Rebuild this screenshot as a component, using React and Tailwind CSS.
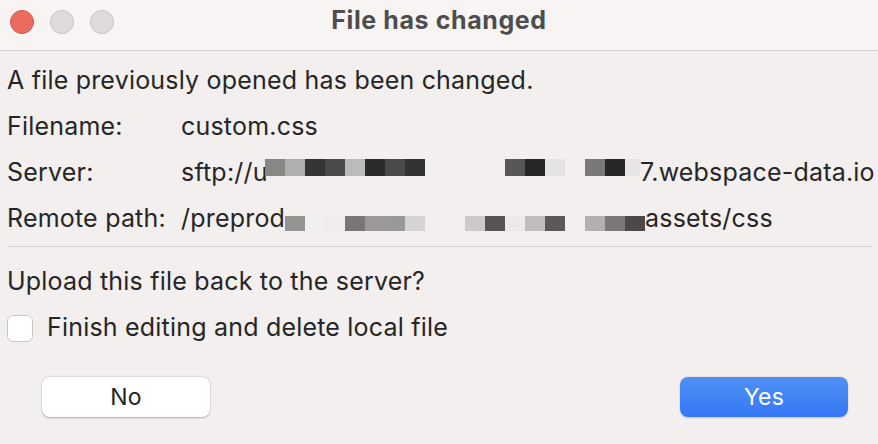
import React from "react";

const serverBlocks = [
  ["#878786", 20], ["#b0afaf", 20], ["#353535", 20], ["#4a4a4a", 20],
  ["#bcbbba", 20], ["#2b2b2b", 20], ["#4b4b4b", 20], ["#333332", 20],
  [null, 80],
  ["#585657", 20], ["#262626", 20], ["#e6e4e3", 20],
  [null, 20],
  ["#7a7978", 20], ["#272727", 20], ["#e7e5e4", 15],
];

const pathBlocks = [
  ["#959494", 20], ["#f1f0ee", 20], ["#efedec", 20], ["#777675", 20],
  ["#9a9998", 20], ["#999898", 20], ["#d5d4d3", 20],
  [null, 40],
  ["#cbcac9", 20], ["#555453", 20], ["#ebeae8", 20], ["#bebdbc", 20], ["#5a5958", 20],
  [null, 20],
  ["#b1b0af", 20], ["#7a7978", 20], ["#4a4948", 20],
];

function Pixels({ blocks, h, className }) {
  return (
    <span className={`flex shrink-0 ${className}`}>
      {blocks.map(([c, w], i) => (
        <span key={i} className="block shrink-0" style={{ width: w, height: h, background: c || "transparent" }} />
      ))}
    </span>
  );
}

function Row({ label, children }) {
  return (
    <div className="flex items-center h-[46px]">
      <span className="w-[174px] shrink-0">{label}</span>
      <div className="flex items-center whitespace-nowrap">{children}</div>
    </div>
  );
}

export default function App() {
  return (
    <div
      className="w-[878px] h-[444px] bg-[#f2efee] text-[#262626] overflow-hidden"
      style={{ fontFamily: "Inter, 'Noto Sans', sans-serif" }}
    >
      {/* title bar */}
      <div className="relative h-[51px] bg-[#f7f4f3] border-b border-[#d2cfce] flex items-center justify-center">
        <div className="absolute left-[10px] top-[10px] flex gap-[16px]">
          <span className="w-[24px] h-[24px] rounded-full bg-[#ed6a5e] border border-[#d5574c]" />
          <span className="w-[24px] h-[24px] rounded-full bg-[#dedbda] border border-[#c5c2c1]" />
          <span className="w-[24px] h-[24px] rounded-full bg-[#dedbda] border border-[#c5c2c1]" />
        </div>
        <h1 className="text-[25px] font-bold tracking-[0.6px] text-[#4d4d4d] -mt-[9px]">File has changed</h1>
      </div>

      <div className="pl-[7px] pr-[6px] pt-[7px] text-[25px] tracking-[0.2px]">
        <div className="flex items-center h-[46px]">A file previously opened has been changed.</div>
        <Row label="Filename:">custom.css</Row>
        <Row label="Server:">
          <span className="w-[84px] shrink-0">sftp://u</span>
          <Pixels blocks={serverBlocks} h={17} className="mb-[11px]" />
          <span>7.webspace-data.io</span>
        </Row>
        <Row label="Remote path:">
          <span className="w-[104px] shrink-0">/preprod</span>
          <Pixels blocks={pathBlocks} h={15} className="mt-[9px]" />
          <span>assets/css</span>
        </Row>

        <div className="mt-[4px] h-px bg-[#d8d5d4]" />

        <div className="flex items-center h-[46px] mt-[12px]">Upload this file back to the server?</div>
        <div className="flex items-center h-[46px]">
          <span className="w-[26px] h-[27px] rounded-[6px] bg-white border border-[#cac7c6] mr-[14px]" />
          Finish editing and delete local file
        </div>

        <div className="flex justify-between mt-[26px] pl-[35px] pr-[24px]">
          <button className="w-[168px] h-[40px] rounded-[8px] bg-white text-[23px] text-[#1f1f1f] shadow-[0_0.5px_2px_rgba(0,0,0,0.3)]">
            No
          </button>
          <button className="w-[168px] h-[40px] rounded-[8px] bg-gradient-to-b from-[#4f91f6] to-[#3577f5] text-[23px] text-white shadow-[0_0.5px_2px_rgba(0,0,0,0.2)]">
            Yes
          </button>
        </div>
      </div>
    </div>
  );
}
